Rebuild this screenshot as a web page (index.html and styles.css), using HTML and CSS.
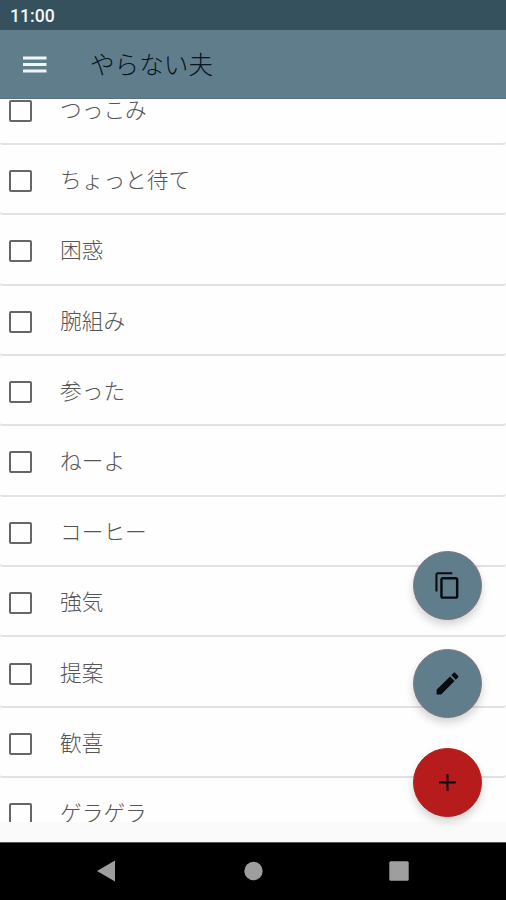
FILE: index.html
```html
<!DOCTYPE html>
<html lang="ja">
<head>
    <meta charset="UTF-8">
    <meta name="viewport" content="width=device-width, initial-scale=1.0">
    <title>やらない夫</title>
    <link rel="stylesheet" href="styles.css">
</head>
<body>

    <div class="status-bar">11:00</div>

    <div class="app-bar">
        <svg class="menu-icon" viewBox="0 0 24 17">
            <path d="M0 0.5h23.500v3H0zM0 7h23.500v3H0zM0 13.500h23.500v3H0z"/>
        </svg>
        <h1>やらない夫</h1>
    </div>

    <div class="list">
        <div class="item"><span class="checkbox"></span><p>つっこみ</p></div>
        <div class="item"><span class="checkbox"></span><p>ちょっと待て</p></div>
        <div class="item"><span class="checkbox"></span><p>困惑</p></div>
        <div class="item"><span class="checkbox"></span><p>腕組み</p></div>
        <div class="item"><span class="checkbox"></span><p>参った</p></div>
        <div class="item"><span class="checkbox"></span><p>ねーよ</p></div>
        <div class="item"><span class="checkbox"></span><p>コーヒー</p></div>
        <div class="item"><span class="checkbox"></span><p>強気</p></div>
        <div class="item"><span class="checkbox"></span><p>提案</p></div>
        <div class="item"><span class="checkbox"></span><p>歓喜</p></div>
        <div class="item"><span class="checkbox"></span><p>ゲラゲラ</p></div>
    </div>

    <!-- Floating buttons -->
    <div class="fab-group">
        <div class="fab">
            <svg viewBox="0 0 24 24">
                <path d="M16 1H4c-1.1 0-2 .9-2 2v14h1.700V2.700H16V1zm3 4H8c-1.1 0-2 .9-2 2v14c0 1.1.9 2 2 2h11c1.1 0 2-.9 2-2V7c0-1.1-.9-2-2-2zm0 16H8V7h11v14z"/>
            </svg>
        </div>
        <div class="fab">
            <svg viewBox="0 0 24 24">
                <path d="M3 17.25V21h3.75L17.81 9.94l-3.75-3.75L3 17.25zM20.71 7.04c.39-.39.39-1.02 0-1.41l-2.34-2.34c-.39-.39-1.02-.39-1.41 0l-1.83 1.83 3.75 3.75 1.83-1.83z"/>
            </svg>
        </div>
        <div class="fab add">
            <svg viewBox="0 0 24 24">
                <path d="M19 12.800h-6.200V19h-1.600v-6.200H5v-1.600h6.200V5h1.600v6.200H19z"/>
            </svg>
        </div>
    </div>

    <div class="nav-bar">
        <svg viewBox="0 0 22 22"><path d="M2 11L20 0.5v21z"/></svg>
        <svg viewBox="0 0 22 22"><circle cx="11.5" cy="11" r="9.2"/></svg>
        <svg viewBox="0 0 22 22"><rect x="1.3" y="1.3" width="19.4" height="19.4" rx="1.5"/></svg>
    </div>

</body>
</html>
```

FILE: styles.css
```css
* {
    box-sizing: border-box;
}

body {
    position: relative;
    display: flex;
    flex-direction: column;
    height: 900px;
    margin: 0;
    overflow: hidden;
    background-color: #fafafa;
    font-family: Roboto, "Noto Sans CJK JP", sans-serif;
}

.status-bar {
    height: 30px;
    padding-left: 10px;
    background-color: #35515e;
    color: #f4f7f8;
    font-size: 17.6px;
    font-weight: 500;
    line-height: 32px;
}

.app-bar {
    display: flex;
    align-items: center;
    height: 69px;
    padding: 1px 0 0 23px;
    background-color: #607d8c;
    border-bottom: 1px solid #56727f;
}

.menu-icon {
    width: 24px;
    height: 17px;
    fill: #f0f5fa;
}

.app-bar h1 {
    margin: 0 0 0 43px;
    padding-top: 3px;
    color: #07141b;
    font-size: 24.6px;
    font-weight: 300;
    line-height: 36px;
}

.list {
    height: 723px;
    overflow: hidden;
}

.item {
    display: flex;
    align-items: center;
    height: 70.36px;
    padding-left: 9px;
    background-color: #fefefe;
    border-bottom: 2px solid #e2e2e2;
    border-radius: 3px;
}

/* the list is scrolled part way through the first item */
.item:first-child {
    margin-top: -24.5px;
}

.checkbox {
    width: 23px;
    height: 22px;
    margin-top: 4px;
    border: 2px solid #666;
    border-radius: 2px;
}

.item p {
    margin: 0 0 0 28px;
    padding-top: 4px;
    color: #555;
    font-size: 21.7px;
    font-weight: 300;
    line-height: 32px;
}

.fab-group {
    position: absolute;
    top: 550.5px;
    right: 24px;
    display: flex;
    flex-direction: column;
    gap: 29.5px;
}

.fab {
    display: flex;
    align-items: center;
    justify-content: center;
    width: 69px;
    height: 69px;
    border: 1px solid #87727f;
    border-radius: 50%;
    background-color: #607d8c;
    box-shadow: 0 5px 9px rgba(0, 0, 0, 0.17);
}

.fab svg {
    width: 29px;
    height: 29px;
    fill: #050b0e;
}

.fab.add {
    border-color: #b71c1c;
    background-color: #b71c1c;
}

.nav-bar {
    display: flex;
    justify-content: space-between;
    align-items: center;
    height: 58px;
    margin-top: auto;
    padding: 0 96px 2px 95px;
    background-color: #000;
    border-top: 1px solid #555;
}

.nav-bar svg {
    width: 22px;
    height: 22px;
    fill: #9e9e9e;
}
```
